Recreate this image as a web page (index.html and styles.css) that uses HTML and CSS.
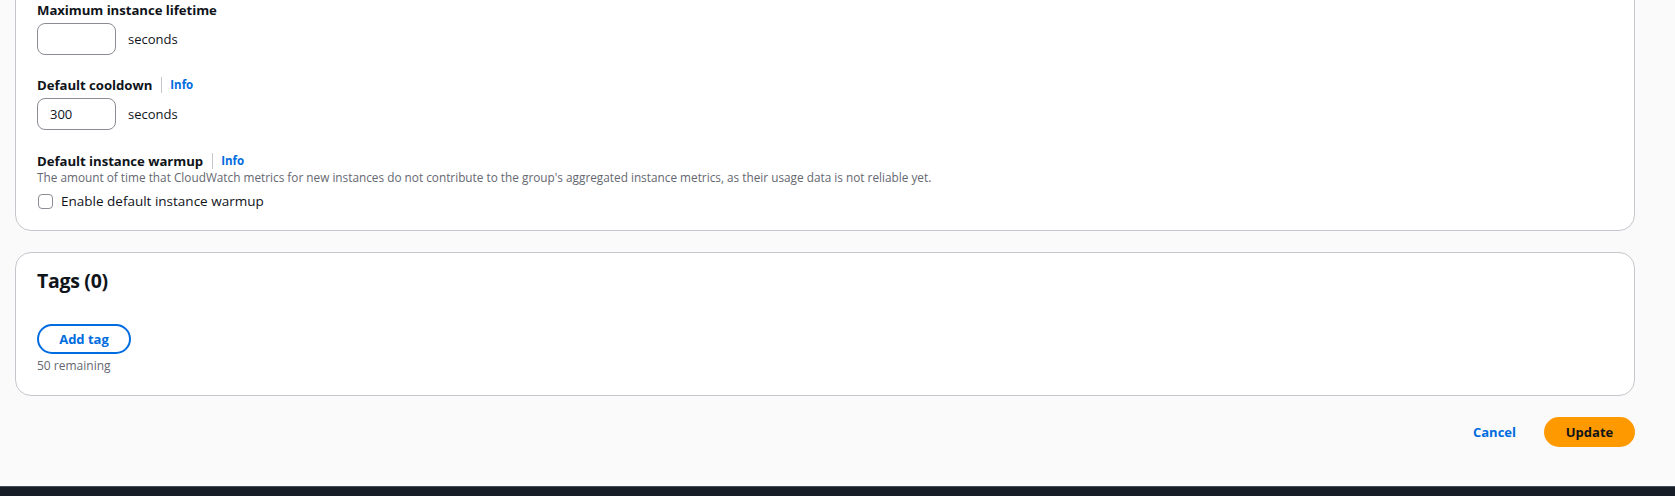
FILE: index.html
```html
<!DOCTYPE html>
<html lang="en">
<head>
<meta charset="utf-8">
<title>Edit Auto Scaling group</title>
<link rel="stylesheet" href="styles.css">
</head>
<body>
<main class="page">
  <section class="card card-settings">
    <div class="field">
      <div class="label-row"><span class="label">Maximum instance lifetime</span></div>
      <div class="control-row">
        <input class="text-input" type="text" value="">
        <span class="unit">seconds</span>
      </div>
    </div>
    <div class="field field-2">
      <div class="label-row"><span class="label">Default cooldown</span><span class="sep"></span><a class="info">Info</a></div>
      <div class="control-row">
        <input class="text-input" type="text" value="300">
        <span class="unit">seconds</span>
      </div>
    </div>
    <div class="field field-3">
      <div class="label-row"><span class="label">Default instance warmup</span><span class="sep"></span><a class="info">Info</a></div>
      <div class="description">The amount of time that CloudWatch metrics for new instances do not contribute to the group's aggregated instance metrics, as their usage data is not reliable yet.</div>
      <label class="checkbox-row"><span class="checkbox"></span><span class="checkbox-label">Enable default instance warmup</span></label>
    </div>
  </section>

  <section class="card card-tags">
    <h2 class="card-title">Tags (0)</h2>
    <button class="btn-outline">Add tag</button>
    <div class="hint">50 remaining</div>
  </section>

  <div class="actions">
    <button class="btn-link">Cancel</button>
    <button class="btn-primary">Update</button>
  </div>
</main>
<footer class="footer"></footer>
</body>
</html>
```

FILE: styles.css
```css
* { box-sizing: border-box; }
html, body { margin: 0; padding: 0; }
body {
  background: #fafafa;
  font-family: "Open Sans", "Noto Sans", sans-serif;
  color: #0f141a;
  overflow: hidden;
}
.page {
  padding: 0 40px 0 15px;
}
.card {
  background: #ffffff;
  border: 1px solid #c6c6cd;
  border-radius: 16px;
}
.card-settings {
  margin-top: -20px;
  padding: 19px 20px 19px 21px;
}
.label-row {
  display: flex;
  align-items: center;
  height: 19px;
}
.label {
  font-size: 13.2px;
  font-weight: 700;
  letter-spacing: -0.05px;
}
.sep {
  width: 1px;
  height: 16px;
  background: #c6c6cd;
  margin: 0 8px 0 9px;
}
.info {
  font-size: 11.5px;
  font-weight: 700;
  color: #006ce0;
}
.control-row {
  display: flex;
  align-items: center;
  margin-top: 4px;
}
.text-input {
  width: 79px;
  height: 32px;
  border: 1px solid #8c8c94;
  border-radius: 8px;
  padding: 0 12px;
  font-family: inherit;
  font-size: 13px;
  color: #0f141a;
  background: #fff;
  outline: none;
}
.unit {
  margin-left: 12px;
  font-size: 13px;
}
.field-2 { margin-top: 20px; }
.field-3 { margin-top: 21px; }
.description {
  font-size: 11.8px;
  color: #656871;
  line-height: 15px;
}
.checkbox-row {
  display: flex;
  align-items: center;
  margin-top: 6px;
  height: 20px;
}
.checkbox {
  width: 15px;
  height: 15px;
  border: 1px solid #8c8c94;
  border-radius: 4px;
  margin-left: 1px;
}
.checkbox-label {
  margin-left: 8px;
  font-size: 13.5px;
}
.card-tags {
  margin-top: 21px;
  padding: 16px 20px 21px 21px;
}
.card-title {
  margin: 0;
  font-size: 19.5px;
  line-height: 24px;
  font-weight: 700;
  letter-spacing: -0.3px;
}
.btn-outline {
  display: block;
  margin-top: 31px;
  width: 94px;
  height: 30px;
  border: 2px solid #006ce0;
  border-radius: 16px;
  background: #fff;
  color: #006ce0;
  font-family: inherit;
  font-size: 13px;
  font-weight: 700;
  padding: 0;
}
.hint {
  margin-top: 4px;
  font-size: 12px;
  line-height: 16px;
  color: #656871;
}
.actions {
  display: flex;
  justify-content: flex-end;
  align-items: center;
  margin-top: 21px;
  gap: 28px;
}
.btn-link {
  background: none;
  border: none;
  padding: 0;
  color: #006ce0;
  font-family: inherit;
  font-size: 13px;
  font-weight: 700;
}
.btn-primary {
  width: 91px;
  height: 30px;
  border: none;
  border-radius: 16px;
  background: #ff9900;
  color: #0f141a;
  font-family: inherit;
  font-size: 13px;
  font-weight: 700;
  padding: 0;
}
.footer {
  margin-top: 39px;
  height: 40px;
  background: #161d26;
  border-top: 1px solid #414d5c;
}
```
